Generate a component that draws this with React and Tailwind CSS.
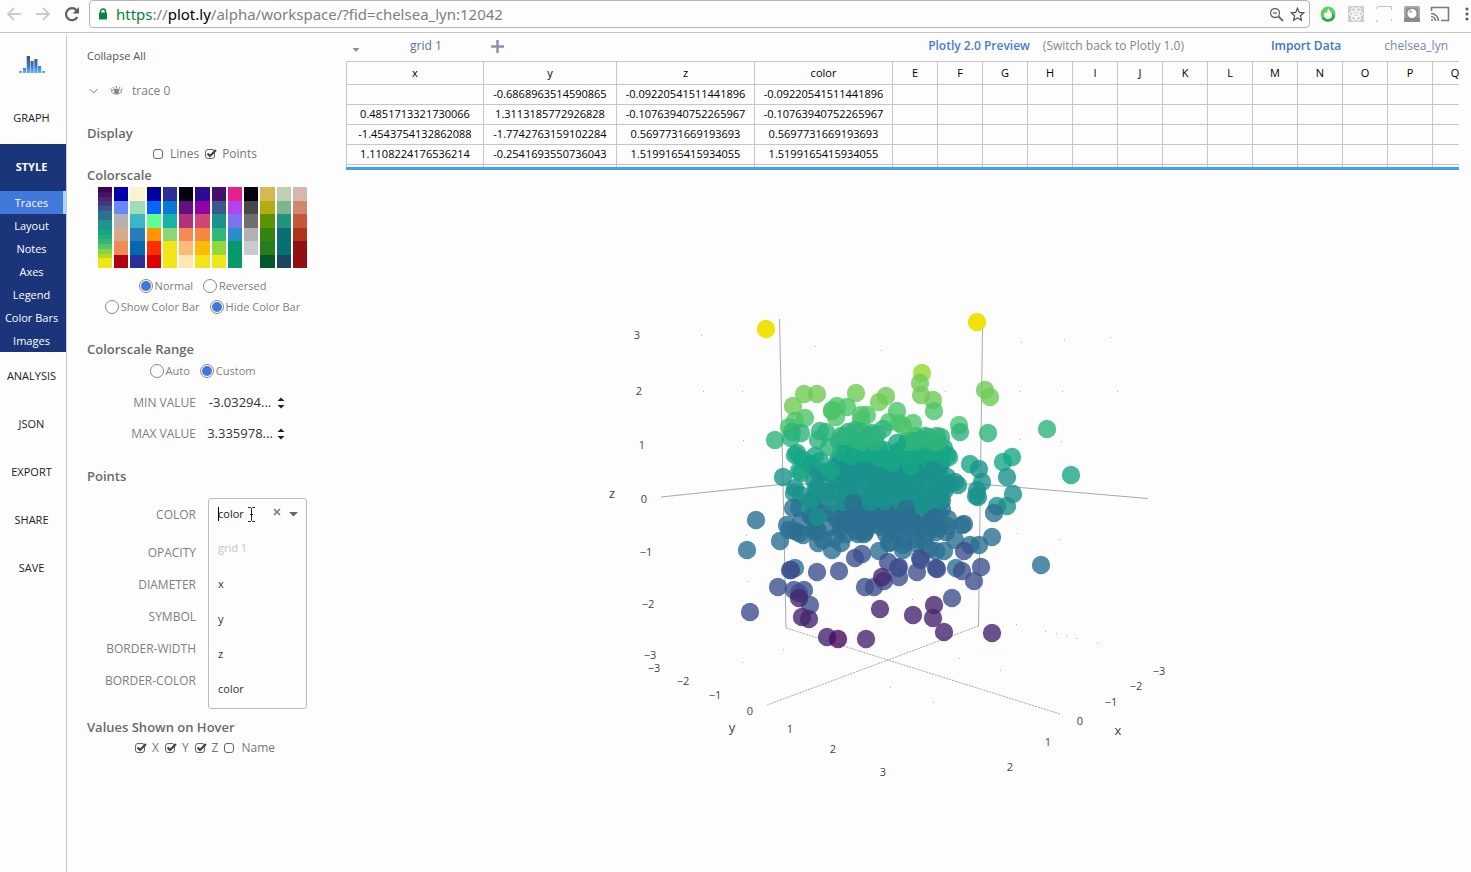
import React from "react";

const VIRIDIS = [
  "#440154", "#461063", "#4a2373", "#453882", "#39568c", "#2c728e", "#2c728e", "#1f948c", "#1f948c",
  "#19a584", "#22ad80", "#34b679", "#55c667", "#86d549", "#addc1a", "#f1e51a", "#f1e51a",
];

const SCALES = [
  ["Viridis", VIRIDIS],
  ["RdBu", ["#0000ac", "#6788f8", "#b2b2b2", "#d5ab8a", "#f08a57", "#b20012"]],
  ["YlGnBu", ["#fdf3d0", "#a0dcb5", "#3ab6c8", "#2b7dba", "#0667b0", "#2b2f98"]],
  ["Jet", ["#00009c", "#0566ff", "#60ff90", "#ff9600", "#ff2f00", "#dc0000"]],
  ["Parula", ["#2e2e98", "#0a78d8", "#18b4a8", "#8cd674", "#f1e51a", "#f1e51a"]],
  ["Magma", ["#03030f", "#640f80", "#b3307c", "#f18a55", "#fabb78", "#fde8b5"]],
  ["Plasma", ["#2b0a94", "#8e04a4", "#d04776", "#f6883e", "#fdbb08", "#f1e51a"]],
  ["Viridis stepped", ["#48106a", "#3b588e", "#1c928c", "#30b87a", "#90d93c", "#f1e51a"]],
  ["Cool", ["#e4228e", "#b343ec", "#7a74f0", "#2b8ec8", "#049a6c", "#049a6c"]],
  ["Greys", ["#03030f", "#474747", "#6f6f6f", "#b2b2b2", "#cacaca", "#fdfdfd"]],
  ["Olive", ["#d4b850", "#b0ad12", "#5f9203", "#378310", "#267d1c", "#05582a"]],
  ["Teal", ["#bdcfb5", "#7cb590", "#22937c", "#086f72", "#086f72", "#1a485e"]],
  ["Reds", ["#d8b5ad", "#cf8870", "#c4573c", "#b03518", "#921014", "#921014"]],
];

const LEVELS = [
  "#f0e30b", "#93da2c", "#6fcb55", "#4bc469", "#2db37a", "#17a685",
  "#1a918c", "#2b6f91", "#3d508d", "#46256f", "#460a5c",
];

/* [x, y, level] */
const OUTER = [
  [766,329,0],[977,322,0],[922,373,1],[920,383,2],[921,395,2],[804,394,2],[817,394,2],[793,406,2],
  [856,393,2],[886,396,2],[879,402,2],[985,390,2],[990,397,2],[933,400,2],[934,411,3],[832,410,3],
  [832,411,3],[837,406,3],[847,407,3],[897,411,3],[836,417,3],[861,415,3],[867,415,3],
  [861,420,3],[795,421,3],[805,418,3],[789,427,3],[913,423,3],[889,422,3],[899,423,3],[903,426,3],[959,425,3],
  [775,440,4],[792,432,4],[801,433,4],[791,438,4],[820,431,4],[826,432,4],[883,429,4],[872,433,4],[855,430,4],
  [848,432,4],[861,432,4],[841,436,4],[960,432,4],[988,433,4],[1047,429,4],[941,437,4],[925,436,4],
  [920,440,4],[932,441,4],[914,442,4],[938,442,4],[818,440,4],[829,447,4],[1012,457,5],[1003,462,5],
  [970,464,5],[1071,475,5],[949,457,5],[797,453,5],[795,455,5],[802,459,5],[799,471,5],[801,473,5],
  [815,456,5],[820,461,5],[897,443,5],[783,477,6],[979,469,6],[1007,477,6],[982,482,6],[977,490,6],
  [976,496,6],[978,497,6],[958,485,6],[955,482,6],[1013,494,6],[997,506,6],[1007,506,6],[794,493,6],[801,495,6],
  [799,508,6],[817,517,6],[994,513,7],[793,508,7],[756,520,7],[747,550,7],[780,541,7],[787,525,7],
  [789,530,7],[795,531,7],[801,521,7],[803,535,7],[818,543,7],[823,540,7],[832,550,7],[795,568,7],[956,568,7],
  [992,537,7],[979,545,7],[970,545,7],[964,524,7],[962,525,7],[1041,565,7],[955,540,7],[944,551,7],
  [778,587,8],[750,612,8],[791,570,8],[790,570,8],[817,572,8],[839,571,8],[855,558,8],[862,554,8],[865,587,8],
  [874,587,8],[794,590,8],[804,590,8],[799,598,9],[799,593,8],[810,605,8],[882,577,9],[884,581,8],
  [888,562,8],[898,568,8],[899,577,8],[899,567,8],[917,572,8],[920,558,8],[921,560,8],[937,569,8],[936,568,8],
  [964,551,8],[962,571,8],[974,581,8],[981,567,8],[952,598,8],[802,617,9],[809,619,9],[827,637,9],
  [838,639,10],[866,639,9],[880,609,9],[913,615,9],[934,605,9],[933,618,9],[944,632,9],[992,633,9],
];

function levelAt(y) {
  if (y < 442) return 4;
  if (y < 460) return 5;
  if (y < 503) return 6;
  return 7;
}

function cloud() {
  let seed = 7;
  const rand = () => {
    seed = (seed * 1103515245 + 12345) % 2147483648;
    return seed / 2147483648;
  };
  const points = [];
  const fill = (x0, x1, y0, y1, step) => {
    for (let y = y0; y <= y1; y += step) {
      for (let x = x0; x <= x1; x += step) {
        const px = x + (rand() - 0.5) * step * 1.4;
        const py = y + (rand() - 0.5) * step * 1.4;
        points.push([Math.round(px), Math.round(py), levelAt(py + (rand() - 0.5) * 8)]);
      }
    }
  };
  fill(844, 872, 438, 448, 7);
  fill(906, 938, 438, 448, 7);
  fill(840, 948, 452, 534, 7);
  fill(814, 838, 470, 538, 9);
  fill(802, 812, 462, 535, 16);
  fill(842, 868, 538, 545, 8);
  fill(884, 934, 538, 553, 8);
  return points.sort((a, b) => b[2] - a[2]);
}

const CLOUD = cloud();

const TICKS = [
  [637,339,"3"],[639,395,"2"],[642,449,"1"],[644,503,"0"],[646,556,"−1"],[648,608,"−2"],[650,659,"−3"],
  [654,672,"−3"],[683,685,"−2"],[715,699,"−1"],[750,715,"0"],[790,733,"1"],[833,753,"2"],[883,776,"3"],
  [1159,675,"−3"],[1136,690,"−2"],[1111,706,"−1"],[1080,725,"0"],[1048,746,"1"],[1010,771,"2"],
];

const SPECKS = [
  [815,346],[881,350],[742,391],[743,440],[945,391],[1021,342],[1064,340],[1020,391],[1062,391],[1019,439],
  [1061,441],[746,535],[747,581],[783,649],[912,599],[1017,533],[1059,539],[1016,624],[1045,631],[1056,633],
  [1066,636],[1076,638],[1097,643],[959,658],[1000,670],[890,687],[933,702],[742,662],[701,335],[1110,337],[1117,391],[703,391],
];

function Scatter() {
  return (
    <svg viewBox="346 170 1113 702" className="block w-full" role="img" aria-label="3D scatter plot">
      <g fill="#b4b4b4">
        {SPECKS.map(([x, y], i) => <rect key={i} x={x} y={y} width="1" height="1" />)}
      </g>
      <g fill="none" stroke="#a9a9a9" strokeWidth="1">
        <path d="M779.5 319L786 628" />
        <path d="M982.5 328L978.5 626" />
        <path d="M661 497L785 484L979 484L1148 498.500" />
        <path d="M786 628L888 660L1060 714" strokeDasharray="2 1" />
        <path d="M978.500 626L888 660L767 705" strokeDasharray="2 1" />
      </g>
      <g fillOpacity="0.8">
        {CLOUD.map(([x, y, l], i) => <circle key={i} cx={x} cy={y} r="9.200" fill={LEVELS[l]} />)}
        {[...OUTER].sort((a, b) => a[2] - b[2]).map(([x, y, l], i) => (
          <circle key={i} cx={x} cy={y} r="9.200" fill={LEVELS[l]} fillOpacity={l === 0 ? 1 : 0.8} />
        ))}
        <circle cx="853" cy="503" r="9.200" fill="#2b6f91" />
        <circle cx="906" cy="509" r="9.200" fill="#2b6f91" />
        <circle cx="911" cy="466" r="9.200" fill="#17a685" />
        <circle cx="831" cy="470" r="9.200" fill="#17a685" />
        <circle cx="933" cy="470" r="9.200" fill="#1a918c" />
      </g>
      <g fill="#444" fontSize="11" textAnchor="middle" className="font-['Open_Sans',sans-serif]">
        {TICKS.map(([x, y, t], i) => <text key={i} x={x} y={y}>{t}</text>)}
      </g>
      <g fill="#444" fontSize="13" textAnchor="middle" className="font-['Open_Sans',sans-serif]">
        <text x="612" y="498">z</text>
        <text x="732" y="732">y</text>
        <text x="1118" y="735">x</text>
      </g>
    </svg>
  );
}

function Toolbar() {
  return (
    <header className="flex h-[33px] items-start border-b border-[#c4c4c4]">
      <div className="flex h-7 w-[89px] shrink-0 items-center gap-[13px] pl-1.5">
        <button aria-label="Back">
          <svg width="16" height="16" viewBox="0 0 16 16" fill="none" stroke="#cbcbcb" strokeWidth="1.800"><path d="M15 8H2.500M8 2L2 8l6 6" /></svg>
        </button>
        <button aria-label="Forward">
          <svg width="16" height="16" viewBox="0 0 16 16" fill="none" stroke="#cbcbcb" strokeWidth="1.800"><path d="M1 8h12.500M8 2l6 6-6 6" /></svg>
        </button>
        <button aria-label="Reload">
          <svg width="16" height="16" viewBox="0 0 16 16"><path d="M13.300 11A6 6 0 1 1 12.500 4.200" fill="none" stroke="#5f5f5f" strokeWidth="2.200" /><path d="M15 1v6.500H8.500z" fill="#5f5f5f" /></svg>
        </button>
      </div>
      <div className="flex h-7 min-w-0 flex-1 items-center rounded border border-[#b4b4b4] pl-2 pr-1">
        <svg width="10" height="12" viewBox="0 0 10 12" className="shrink-0"><path d="M2.500 5V3.500a2.500 2.500 0 0 1 5 0V5" fill="none" stroke="#0b8043" strokeWidth="1.500" /><rect x="1" y="4.500" width="8" height="7" rx="1" fill="#0b8043" /></svg>
        <div className="ml-2 flex-1 truncate font-['Noto_Sans',sans-serif] text-[15px] text-[#808080]">
          <span className="text-[#0b8043]">https</span>://<span className="text-black">plot.ly</span>/alpha/workspace/?fid=chelsea_lyn:12042
        </div>
        <button aria-label="Zoom">
          <svg width="15" height="15" viewBox="0 0 15 15" fill="none" stroke="#666" strokeWidth="1.300"><circle cx="6" cy="6" r="4.500" /><path d="M4 6h4" /><path d="M9.500 9.500L14 14" strokeWidth="1.800" /></svg>
        </button>
        <button aria-label="Bookmark" className="ml-1.5">
          <svg width="15" height="15" viewBox="0 0 15 15" fill="none" stroke="#555" strokeWidth="1.300"><path d="M7.500 1.200l1.800 4.200 4.500.4-3.400 3 1 4.400-3.900-2.300-3.900 2.300 1-4.400-3.400-3 4.500-.4z" /></svg>
        </button>
      </div>
      <div className="flex h-7 w-[161px] shrink-0 items-center gap-3 overflow-hidden pl-2.5">
        <button aria-label="Flame extension">
          <svg width="16" height="16" viewBox="0 0 16 16"><circle cx="8" cy="8" r="7.500" fill="#5fd35f" /><path d="M1.500 12A7.500 7.500 0 0 0 15 11L13 7z" fill="#2ea84a" /><path d="M8.500 2.500c.5 2 3.500 3.500 3.500 6.500a4 4 0 0 1-8 0c0-1.500.8-2.300 1.500-3 .2 1 .8 1.200 1.200 1C7.500 6 7.300 4 8.500 2.500z" fill="#fff" /></svg>
        </button>
        <button aria-label="React extension">
          <svg width="16" height="16" viewBox="0 0 16 16"><rect width="16" height="16" fill="#cfcfcf" /><g fill="none" stroke="#fdfdfd"><ellipse cx="8" cy="8" rx="7" ry="2.600" /><ellipse cx="8" cy="8" rx="7" ry="2.600" transform="rotate(60 8 8)" /><ellipse cx="8" cy="8" rx="7" ry="2.600" transform="rotate(120 8 8)" /></g><circle cx="8" cy="8" r="1.300" fill="#fdfdfd" /></svg>
        </button>
        <button aria-label="Frame extension">
          <svg width="16" height="16" viewBox="0 0 16 16" fill="none" stroke="#c4c4c4"><path d="M1 .5h14.500V4M.5 3V1M.5 14v1.500H2M15.500 13v2.500" /></svg>
        </button>
        <button aria-label="Capture extension">
          <svg width="16" height="16" viewBox="0 0 16 16"><rect width="16" height="16" rx="2" fill="#a6a6a6" /><rect y="12" width="16" height="4" rx="1" fill="#8b8b8b" /><rect x="2" y="2" width="12" height="10" rx="2" fill="#8f8f8f" /><circle cx="8" cy="7.500" r="4.500" fill="#fdfdfd" /><circle cx="6.500" cy="5.500" r="1.500" fill="#bbb" /></svg>
        </button>
        <button aria-label="Cast" className="-ml-0.5">
          <svg width="20" height="16" viewBox="0 0 20 16" fill="none" stroke="#7b7b7b" strokeWidth="1.600"><path d="M1.500 5V1.500h17v13H11" /><path d="M1 7.500a7.500 7.500 0 0 1 7.500 7.500M1 10.500A4.500 4.500 0 0 1 5.500 15" /><circle cx="2" cy="14" r="1" fill="#7b7b7b" stroke="none" /></svg>
        </button>
        <button aria-label="Menu" className="shrink-0">
          <svg width="8" height="16" viewBox="0 0 8 16" fill="#5f5f5f"><circle cx="5" cy="3" r="1.600" /><circle cx="5" cy="8" r="1.600" /><circle cx="5" cy="13" r="1.600" /></svg>
        </button>
      </div>
    </header>
  );
}

const SUBNAV = ["Layout", "Notes", "Axes", "Legend", "Color Bars", "Images"];

function Sidebar() {
  const item = "flex w-full items-center justify-center pr-[3px] text-[11px] text-[#222]";
  const sub = "block h-[23px] w-full text-center text-[11px] leading-[23px] text-white";
  return (
    <nav className="mt-0.5 w-[67px] shrink-0 border-r border-[#c8c8c8]">
      <a href="#home" aria-label="Home" className="flex h-[59px] items-center justify-center pr-0.5">
        <svg width="26" height="17" viewBox="0 0 26 17">
          <defs>
            <linearGradient id="logo" x1="0" y1="0" x2="0" y2="17" gradientUnits="userSpaceOnUse">
              <stop offset="0" stopColor="#3e4f7e" /><stop offset="0.600" stopColor="#3f78c4" /><stop offset="1" stopColor="#5ab4f4" />
            </linearGradient>
          </defs>
          <g fill="url(#logo)">
            <rect x="0" y="15" width="3" height="2" /><rect x="4" y="12" width="3" height="5" /><rect x="7.700" y="0" width="3.300" height="17" />
            <rect x="11.500" y="5" width="3.200" height="12" /><rect x="15.300" y="3" width="3.200" height="14" /><rect x="19" y="10" width="3.200" height="7" /><rect x="23" y="15" width="3" height="2" />
          </g>
        </svg>
      </a>
      <button className={item + " h-[50px] pb-0.5"}>GRAPH</button>
      <div className="bg-[#1a3579]">
        <button className="flex h-[47px] w-full items-center justify-center pr-[3px] text-[11px] font-bold text-white">STYLE</button>
        <button className="block h-[23px] w-full border-r-[3px] border-[#a8d8fb] bg-[#4178dc] text-center text-[11px] leading-[23px] text-white">Traces</button>
        {SUBNAV.map((s) => <button key={s} className={sub + " pr-[3px]"}>{s}</button>)}
      </div>
      {["ANALYSIS", "JSON", "EXPORT", "SHARE", "SAVE"].map((s) => (
        <button key={s} className={item + " h-12 pt-px"}>{s}</button>
      ))}
    </nav>
  );
}

function Check({ label, on }) {
  return (
    <label className="flex items-center gap-[7px] text-[12px] text-[#777]">
      <span className="relative flex">
        <input type="checkbox" defaultChecked={on} className="peer size-2.5 appearance-none rounded-[3px] border border-[#666]" />
        <svg width="12" height="10" viewBox="0 0 12 10" className="pointer-events-none absolute left-0 top-0 hidden peer-checked:block">
          <path d="M2.500 4.500L5 7L11 1" fill="none" stroke="#444" strokeWidth="2.200" />
        </svg>
      </span>
      {label}
    </label>
  );
}

function Radio({ name, label, on }) {
  return (
    <label className="flex items-center gap-0.5 text-[11px] text-[#808080]">
      <input type="radio" name={name} defaultChecked={on} className="size-3.5 appearance-none rounded-full border border-[#888] bg-clip-content p-px checked:bg-[#4178dc]" />
      {label}
    </label>
  );
}

function Heading({ children, className = "" }) {
  return <h2 className={"h-5 text-[13px] font-semibold leading-5 text-[#6a6a6a] " + className}>{children}</h2>;
}

function NumberRow({ id, label, value }) {
  return (
    <div className="flex h-[31px] items-center">
      <label htmlFor={id} className="w-[109px] text-right text-[12px] text-[#808080]">{label}</label>
      <input id={id} type="text" defaultValue={value} className="ml-2.5 w-[68px] bg-transparent text-center text-[13px] text-[#333] outline-none" />
      <button aria-label={"Step " + label} className="ml-[3px]">
        <svg width="8" height="12" viewBox="0 0 8 12" fill="#222"><path d="M.5 4L4 .5 7.500 4zM.5 8L4 11.500 7.500 8z" /></svg>
      </button>
    </div>
  );
}

function ColorPicker() {
  return (
    <div className="absolute left-[121px] top-0 z-10 h-[211px] w-[99px] rounded-[3px] border border-[#bdbdbd] bg-[#fdfdfd] text-[11px]">
      <div className="flex h-[30px] items-center pl-[9px] pr-2">
        <span className="h-3.5 w-px shrink-0 bg-black" />
        <input id="color" role="combobox" aria-expanded="true" aria-controls="color-options" type="text" defaultValue="color" className="-ml-px w-7 bg-transparent text-[#222] outline-none" />
        <svg width="7" height="15" viewBox="0 0 7 15" className="ml-0.5 shrink-0" fill="none" stroke="#222"><path d="M0 .5h2.500l1 1 1-1H7M0 14.500h2.500l1-1 1 1H7M3.500 1.500v12M2 7.500h3" /></svg>
        <button aria-label="Clear" className="mb-1 ml-auto">
          <svg width="8" height="8" viewBox="0 0 8 8" stroke="#777" strokeWidth="1.600"><path d="M1 1l6 6M7 1L1 7" /></svg>
        </button>
        <button aria-label="Open" className="ml-2">
          <svg width="9" height="5" viewBox="0 0 9 5" fill="#666"><path d="M0 0h9L4.500 4.500z" /></svg>
        </button>
      </div>
      <p className="mt-0.5 flex h-[35px] items-center pl-[9px] text-[#c4c4c4]">grid 1</p>
      <ul id="color-options" role="listbox" className="mt-px text-[#333]">
        {["x", "y", "z", "color"].map((o) => (
          <li key={o} role="option" aria-selected={o === "color"} className="flex h-[35px] items-center pl-[9px]">{o}</li>
        ))}
      </ul>
    </div>
  );
}

function Panel() {
  return (
    <section className="w-[279px] shrink-0 pl-5 pr-[39px] pt-[13px]">
      <button className="block h-5 text-[11px] leading-5 text-[#555]">Collapse All</button>
      <div className="mt-[15px] flex h-5 items-center text-[12px] text-[#808080]">
        <svg width="10" height="6" viewBox="0 0 10 6" className="ml-0.5" fill="none" stroke="#777"><path d="M.5 1l4 4 4-4" /></svg>
        <svg width="13" height="10" viewBox="0 0 13 10" className="ml-[11px]" fill="none" stroke="#858585"><path d="M1 5.500c3-3 8-3 11 0-3 3.500-8 3.500-11 0zM.5 2.500l1.500 1.500M3 .8L4 2.800M6.500 0v2.500M10 .8L9 2.800M12.500 2.500L11 4" /><circle cx="6.500" cy="5.500" r="2" fill="#858585" /></svg>
        <span className="ml-[9px]">trace 0</span>
      </div>

      <Heading className="mt-[22px]">Display</Heading>
      <div className="flex h-[22px] items-center justify-center gap-1.5 pl-4">
        <Check label="Lines" />
        <Check label="Points" on />
      </div>

      <Heading>Colorscale</Heading>
      <div className="ml-[11px] mt-0.5 grid h-[81px] grid-cols-13 gap-0.5">
        {SCALES.map(([name, colors]) => (
          <button key={name} aria-label={name} className="flex flex-col">
            {colors.map((c, i) => <span key={i} className="w-full flex-1" style={{ background: c }} />)}
          </button>
        ))}
      </div>
      <div className="mt-2 flex h-5 items-center justify-center gap-2.5 pl-[11px]">
        <Radio name="direction" label="Normal" on />
        <Radio name="direction" label="Reversed" />
      </div>
      <div className="mt-px flex h-5 items-center justify-center gap-2.5 pl-[11px]">
        <Radio name="bar" label="Show Color Bar" />
        <Radio name="bar" label="Hide Color Bar" on />
      </div>

      <Heading className="mt-[22px]">Colorscale Range</Heading>
      <div className="mt-0.5 flex h-5 items-center justify-center gap-2.5 pl-[11px]">
        <Radio name="range" label="Auto" />
        <Radio name="range" label="Custom" on />
      </div>
      <div className="mt-1.5">
        <NumberRow id="min" label="MIN VALUE" value="-3.03294..." />
        <NumberRow id="max" label="MAX VALUE" value="3.335978..." />
      </div>

      <Heading className="mt-[17px]">Points</Heading>
      <div className="relative mt-3 w-full text-[12px] text-[#808080]">
        <label htmlFor="color" className="mb-[5px] flex h-[34px] w-[109px] items-center justify-end">COLOR</label>
        {["OPACITY", "DIAMETER", "SYMBOL", "BORDER-WIDTH", "BORDER-COLOR"].map((s) => (
          <div key={s} className="flex h-8 w-[109px] items-center justify-end whitespace-nowrap">{s}</div>
        ))}
        <ColorPicker />
      </div>

      <Heading className="mt-5">Values Shown on Hover</Heading>
      <div className="flex h-[22px] items-center justify-center gap-1.5 pl-4">
        <Check label="X" on />
        <Check label="Y" on />
        <Check label="Z" on />
        <Check label="Name" />
      </div>
    </section>
  );
}

const ROWS = [
  ["", "-0.6868963514590865", "-0.09220541511441896", "-0.09220541511441896"],
  ["0.4851713321730066", "1.3113185772926828", "-0.10763940752265967", "-0.10763940752265967"],
  ["-1.4543754132862088", "-1.7742763159102284", "0.5697731669193693", "0.5697731669193693"],
  ["1.1108224176536214", "-0.2541693550736043", "1.5199165415934055", "1.5199165415934055"],
  ["", "", "", ""],
];
const LETTERS = "EFGHIJKLMNOPQ".split("");

function Grid() {
  const cell = "border border-[#c6c6c6] p-0 pb-0.5 text-center font-normal";
  return (
    <div className="h-[109px] overflow-hidden border-b-[3px] border-[#3f9ff2]">
      <table className="w-[1131px] table-fixed border-collapse text-[11px] leading-none text-black">
        <colgroup>
          <col className="w-[137px]" />
          <col className="w-[133px]" />
          <col className="w-[138px]" />
          <col className="w-[138px]" />
          {LETTERS.map((l) => <col key={l} className="w-[45px]" />)}
        </colgroup>
        <thead>
          <tr className="h-[23px]">
            {["x", "y", "z", "color", ...LETTERS].map((h) => <th key={h} scope="col" className={cell}>{h}</th>)}
          </tr>
        </thead>
        <tbody>
          {ROWS.map((r, i) => (
            <tr key={i} className="h-5">
              {r.map((v, j) => <td key={j} className={cell}>{v}</td>)}
              {LETTERS.map((l) => <td key={l} className={cell} />)}
            </tr>
          ))}
        </tbody>
      </table>
    </div>
  );
}

export default function App() {
  return (
    <div className="flex min-h-screen flex-col overflow-x-hidden bg-[#fdfdfd] font-['Open_Sans',sans-serif]">
      <Toolbar />
      <div className="flex flex-1">
        <Sidebar />
        <Panel />
        <main className="min-w-0 flex-1 pr-3">
          <div className="flex h-7 items-center whitespace-nowrap pb-0.5 text-[12px]">
            <button aria-label="Grid menu" className="ml-1.5 mt-2">
              <svg width="8" height="5" viewBox="0 0 8 5" fill="#8290b8"><path d="M.5 0h7L4 4z" /></svg>
            </button>
            <button className="ml-[50px] text-[#5d6fa5]">grid 1</button>
            <button aria-label="Add grid" className="ml-[49px]">
              <svg width="13" height="13" viewBox="0 0 13 13" stroke="#8793b8" strokeWidth="2.500"><path d="M6.500 0v13M0 6.500h13" /></svg>
            </button>
            <a href="#preview" className="ml-auto font-semibold text-[#4a7ad4]">Plotly 2.0 Preview</a>
            <a href="#switch" className="ml-[13px] text-[#858585]">(Switch back to Plotly 1.0)</a>
            <button className="ml-[87px] font-semibold text-[#3f72d4]">Import Data</button>
            <button className="ml-[43px] mr-[11px] text-[#7787a8]">chelsea_lyn</button>
          </div>
          <Grid />
          <Scatter />
        </main>
      </div>
    </div>
  );
}
